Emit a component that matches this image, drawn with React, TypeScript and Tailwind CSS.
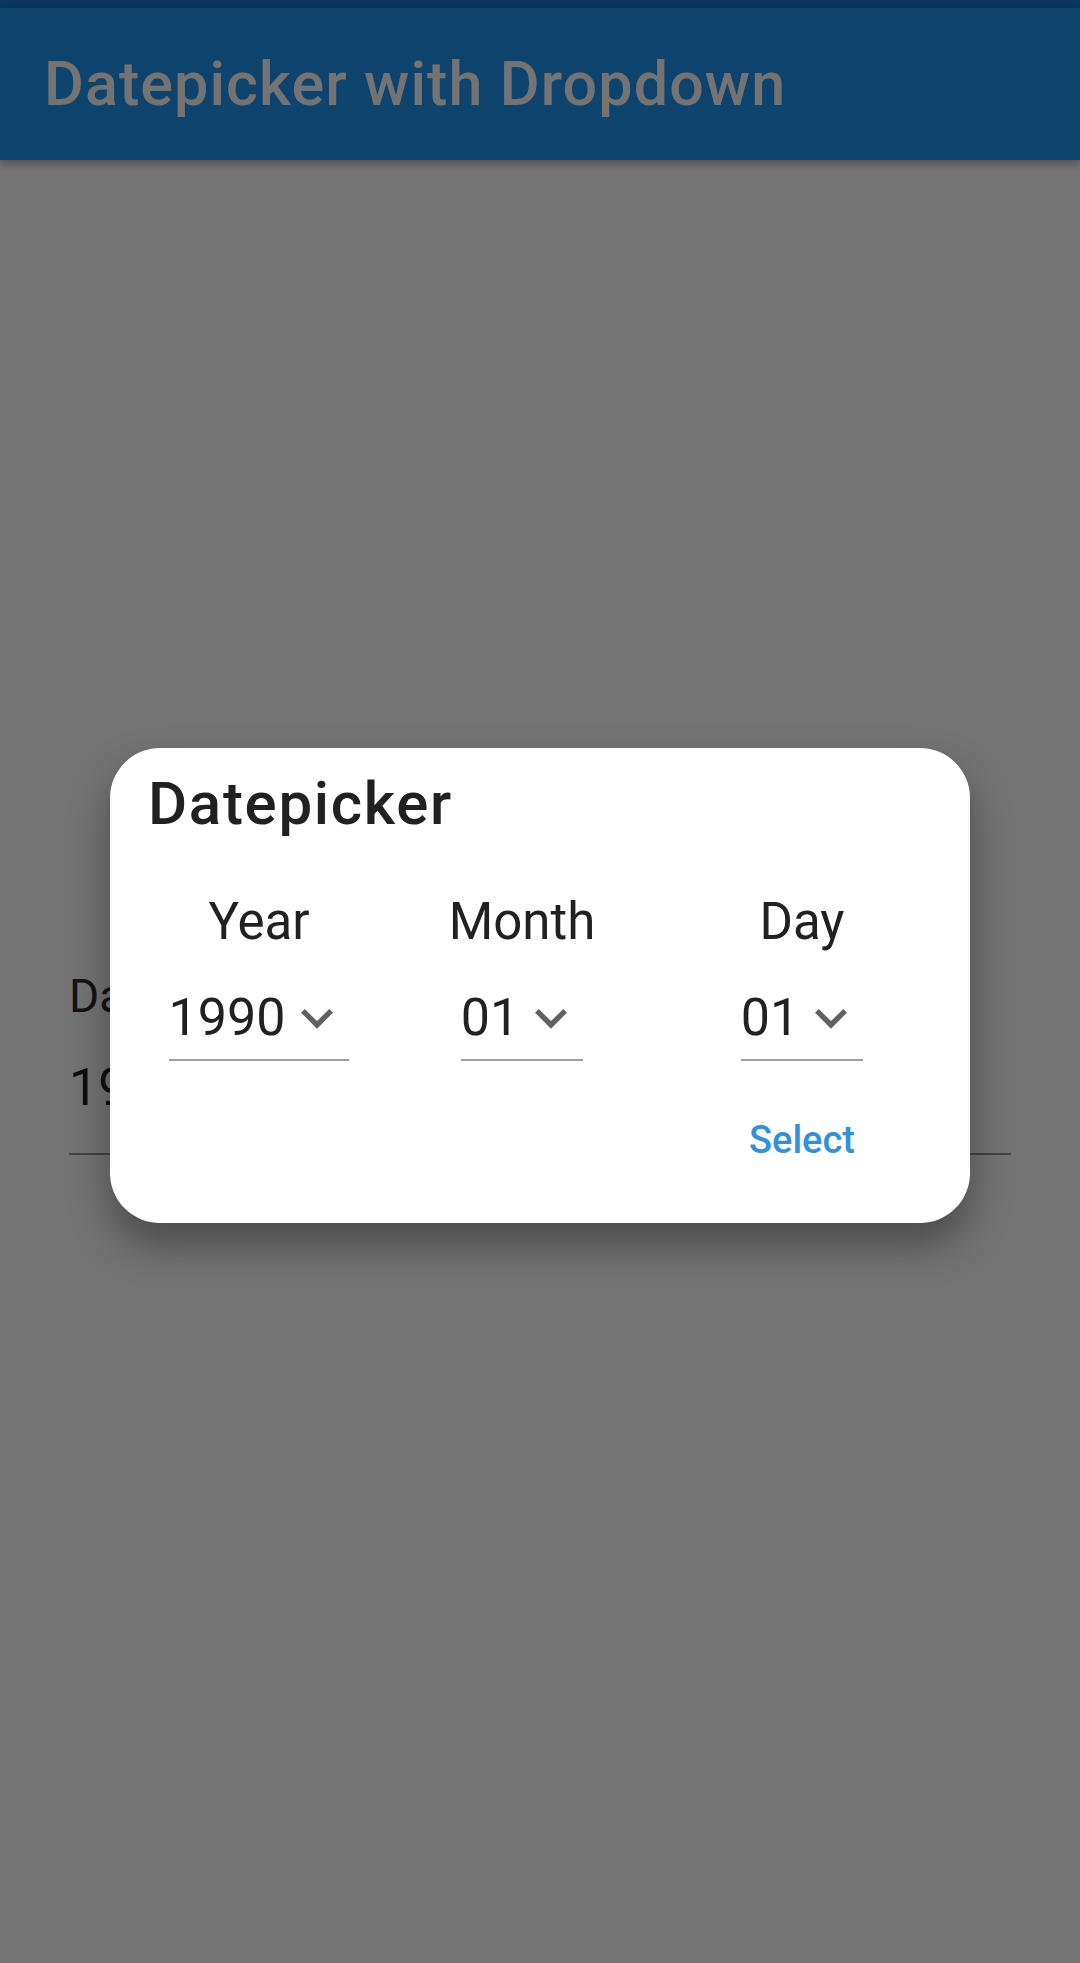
function Dropdown({ value }: { value: string }) {
    return (
        <div className="inline-flex items-center border-b-2 border-[#9e9e9e] pb-[9px]">
            <span className="text-[52px] leading-[64px] text-[#212121]">{value}</span>
            <svg viewBox="0 0 24 24" className="w-[64px] h-[64px] fill-[#616161]">
                <path d="M7.41 8.59L12 13.17l4.59-4.58L18 10l-6 6-6-6 1.41-1.41z" />
            </svg>
        </div>
    )
}

export default function App() {
    return (
        <div
            className="relative h-[1963px] w-full overflow-hidden bg-white"
            style={{ fontFamily: "Roboto, 'Noto Sans', sans-serif" }}
        >
            {/* status bar */}
            <div className="h-[8px] bg-[#1976d2]" />
            {/* app bar */}
            <div className="relative z-10 flex h-[152px] items-center bg-[#2196f3] px-[44px] shadow-[0_4px_8px_rgba(0,0,0,0.3)]">
                <h1 className="text-[61px] font-medium leading-[72px] tracking-[1.1px] text-white">Datepicker with Dropdown</h1>
            </div>

            {/* page body: the text field behind the dialog */}
            <div className="flex h-[1803px] items-center">
                <div className="mx-[69px] flex-1 border-b-2 border-[#949494] pb-[33px]">
                    <p className="text-[46px] leading-[54px] text-[#2a2a2a]">Date of Birth</p>
                    <p className="mt-[33px] text-[52px] leading-[64px] text-[#212121]">1990-01-01</p>
                </div>
            </div>

            {/* modal barrier + dialog */}
            <div className="absolute inset-0 z-20 flex items-center justify-center bg-[rgba(0,0,0,0.55)]">
                <div className="mt-[8px] w-[860px] rounded-[50px] bg-white pt-[20px] pb-[61px] shadow-[0_22px_40px_rgba(0,0,0,0.35)]">
                    <h2 className="pl-[38px] text-[60px] font-medium leading-[72px] tracking-[1.7px] text-[#212121]">Datepicker</h2>
                    <div className="mt-[52px] grid grid-cols-[298px_228px_332px] text-[#212121]">
                        <p className="text-center text-[51px] leading-[60px]">Year</p>
                        <p className="text-center text-[51px] leading-[60px]">Month</p>
                        <p className="text-center text-[51px] leading-[60px]">Day</p>
                        <div className="mt-[34px] flex justify-center">
                            <Dropdown value="1990" />
                        </div>
                        <div className="mt-[34px] flex justify-center">
                            <Dropdown value="01" />
                        </div>
                        <div className="mt-[34px] flex justify-center">
                            <Dropdown value="01" />
                        </div>
                        <div />
                        <div />
                        <div className="mt-[57px] flex justify-center">
                            <button className="text-[38px] font-medium leading-[44px] text-[#3391d9]">Select</button>
                        </div>
                    </div>
                </div>
            </div>
        </div>
    )
}
